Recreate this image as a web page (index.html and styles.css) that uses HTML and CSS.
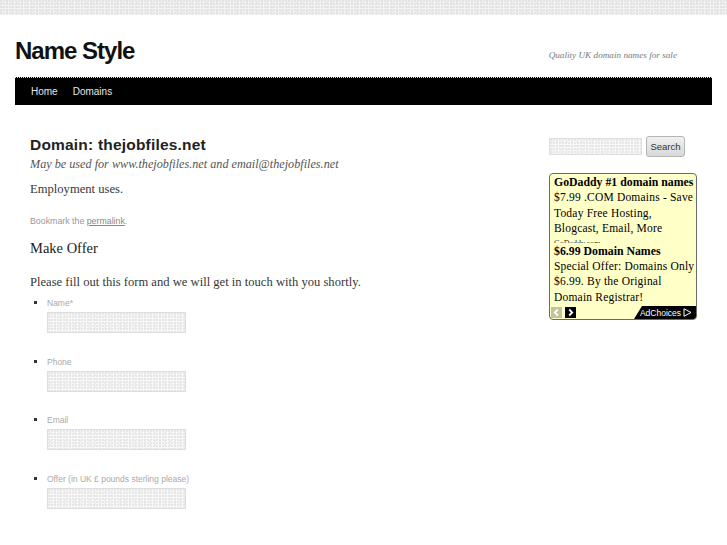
FILE: index.html
```html
<!DOCTYPE html>
<html>
<head>
<meta charset="utf-8">
<title>Domain: thejobfiles.net | Name Style</title>
<link rel="stylesheet" href="styles.css">
</head>
<body>
<div class="topband"></div>
<div class="page">
  <header class="site-header">
    <h1 class="site-title">Name Style</h1>
    <p class="tagline">Quality UK domain names for sale</p>
  </header>
  <nav class="access">
    <a href="#">Home</a>
    <a href="#">Domains</a>
  </nav>
  <div class="main">
    <div class="content">
      <h2 class="entry-title">Domain: thejobfiles.net</h2>
      <p class="subtitle">May be used for www.thejobfiles.net and email@thejobfiles.net</p>
      <p class="body-text">Employment uses.</p>
      <p class="meta">Bookmark the <a href="#">permalink</a>.</p>
      <h3 class="offer-title">Make Offer</h3>
      <p class="body-text intro">Please fill out this form and we will get in touch with you shortly.</p>
      <ul class="form-list">
        <li><label>Name*</label><span class="field"></span></li>
        <li><label>Phone</label><span class="field"></span></li>
        <li><label>Email</label><span class="field"></span></li>
        <li><label>Offer (in UK £ pounds sterling please)</label><span class="field"></span></li>
      </ul>
    </div>
    <aside class="sidebar">
      <div class="search">
        <span class="search-field"></span>
        <span class="search-btn">Search</span>
      </div>
      <div class="ad">
        <div class="ad-body">
          <div class="ad-title">GoDaddy #1 domain names</div>
          <div class="ad-text">$7.99 .COM Domains - Save<br>Today Free Hosting,<br>Blogcast, Email, More</div>
          <div class="ad-url">GoDaddy.com</div>
          <div class="ad-title">$6.99 Domain Names</div>
          <div class="ad-text">Special Offer: Domains Only<br>$6.99. By the Original<br>Domain Registrar!</div>
          <div class="ad-url">www.NetworkSolutions.com</div>
        </div>
        <div class="ad-foot">
          <span class="nav-btn prev"><svg width="11" height="11" viewBox="0 0 11 11"><path d="M6.8 2.5 L3.8 5.5 L6.8 8.5" fill="none" stroke="#fff" stroke-width="1.8"/></svg></span>
          <span class="nav-btn next"><svg width="11" height="11" viewBox="0 0 11 11"><path d="M4.2 2.5 L7.2 5.5 L4.2 8.5" fill="none" stroke="#fff" stroke-width="1.8"/></svg></span>
          <span class="adchoices">AdChoices <svg width="9" height="9" viewBox="0 0 9 9"><path d="M1 0.8 L8 4.5 L1 8.2 Z" fill="none" stroke="#fff" stroke-width="1"/></svg></span>
        </div>
      </div>
    </aside>
  </div>
</div>
</body>
</html>
```

FILE: styles.css
```css
html, body {
  margin: 0;
  padding: 0;
}
body {
  background: #fff;
  font-family: "Liberation Sans", Arial, sans-serif;
  color: #373737;
  width: 727px;
  overflow: hidden;
}
.topband {
  height: 15px;
  background-color: #f3f3f3;
  background-image:
    radial-gradient(circle at 1px 1px, #e2e2e2 0.7px, transparent 0.9px),
    radial-gradient(circle at 1px 1px, #e6e6e6 0.7px, transparent 0.9px);
  background-size: 3px 3px, 5px 4px;
  background-position: 0 0, 1px 2px;
}
.page {
  padding: 0 15px;
}
.site-header {
  display: flex;
  justify-content: space-between;
  align-items: flex-start;
  height: 62px;
}
.site-title {
  margin: 22px 0 0 0;
  font-size: 24px;
  line-height: 28px;
  font-weight: bold;
  color: #111;
  letter-spacing: -1px;
}
.tagline {
  margin: 35px 35px 0 0;
  font-family: "Liberation Serif", "Times New Roman", serif;
  font-style: italic;
  font-size: 9.2px;
  color: #7a7a7a;
}
.access {
  background: #000;
  height: 27px;
  display: flex;
  align-items: center;
  padding-left: 16px;
  gap: 15px;
  border-top: 1px dotted #e0e0e0;
}
.access a {
  color: #e6e6e6;
  text-decoration: none;
  font-size: 10px;
}
.main {
  display: flex;
  justify-content: space-between;
  padding: 0 0 0 15px;
}
.content {
  width: 400px;
  padding-top: 31px;
}
.entry-title {
  margin: 0;
  font-size: 15.5px;
  line-height: 18px;
  font-weight: bold;
  color: #222;
  letter-spacing: 0.2px;
}
.subtitle {
  margin: 2px 0 0 0;
  font-family: "Liberation Serif", "Times New Roman", serif;
  font-style: italic;
  font-size: 12.2px;
  line-height: 16px;
  color: #555;
}
.body-text {
  margin: 9px 0 0 0;
  font-family: "Liberation Serif", "Times New Roman", serif;
  font-size: 12.6px;
  line-height: 16px;
  color: #373737;
}
.meta {
  margin: 19px 0 0 0;
  font-size: 8.8px;
  line-height: 10px;
  color: #999;
}
.meta a {
  color: #888;
}
.offer-title {
  margin: 13px 0 0 0;
  font-family: "Liberation Serif", "Times New Roman", serif;
  font-weight: normal;
  font-size: 14.5px;
  line-height: 18px;
  color: #222;
}
.intro {
  margin-top: 17px;
}
.form-list {
  list-style: square;
  margin: 7px 0 0 0;
  padding: 0 0 0 17px;
  color: #333;
}
.form-list li {
  font-size: 10px;
  margin-bottom: 22.5px;
}
.form-list label {
  display: block;
  color: #aaa;
  font-size: 8.5px;
  line-height: 13px;
}
.field {
  display: block;
  margin-top: 2px;
  width: 137px;
  height: 19px;
  border: 1.5px solid #dedede;
  background-color: #f8f8f8;
  background-image:
    radial-gradient(circle at 1px 1px, #e6e6e6 0.7px, transparent 0.9px),
    radial-gradient(circle at 1px 1px, #ebebeb 0.7px, transparent 0.9px);
  background-size: 3px 3px, 5px 4px;
  background-position: 0 0, 1px 2px;
}
.sidebar {
  width: 163px;
  padding-top: 31px;
}
.search {
  display: flex;
  align-items: center;
  gap: 4px;
}
.search-field {
  display: block;
  width: 91px;
  height: 15px;
  border: 1px solid #dedede;
  background-color: #f8f8f8;
  background-image:
    radial-gradient(circle at 1px 1px, #e6e6e6 0.7px, transparent 0.9px),
    radial-gradient(circle at 1px 1px, #ebebeb 0.7px, transparent 0.9px);
  background-size: 3px 3px, 5px 4px;
  background-position: 0 0, 1px 2px;
}
.search-btn {
  display: flex;
  align-items: center;
  justify-content: center;
  width: 37px;
  height: 19px;
  border: 1px solid #b5b5b5;
  border-radius: 3px;
  background: linear-gradient(#f0f0f0, #d8d8d8);
  font-size: 9.5px;
  color: #333;
}
.ad {
  margin-top: 16px;
  width: 146px;
  height: 145px;
  border: 1px solid #6a6a6a;
  border-radius: 4px;
  background: #ffffc8;
  overflow: hidden;
  display: flex;
  flex-direction: column;
  font-family: "Liberation Serif", "Times New Roman", serif;
  color: #000;
}
.ad-body {
  flex: 1;
  overflow: hidden;
  padding: 1px 0 0 4px;
}
.ad-title {
  font-weight: bold;
  font-size: 11.8px;
  line-height: 15px;
  white-space: nowrap;
}
.ad-text {
  font-size: 11.5px;
  line-height: 15.5px;
  letter-spacing: 0.2px;
  white-space: nowrap;
}
.ad-url {
  font-size: 8px;
  line-height: 10px;
  height: 4px;
  margin: 2px 0 1px 0;
  overflow: hidden;
  color: #333;
}
.ad-foot {
  height: 13px;
  display: flex;
  align-items: center;
  padding-left: 1px;
}
.nav-btn {
  display: block;
  width: 11px;
  height: 11px;
  margin-right: 3px;
}
.nav-btn svg {
  display: block;
}
.prev {
  background: #c4c49c;
}
.next {
  background: #000;
}
.adchoices {
  margin-left: auto;
  height: 13px;
  width: 58px;
  background: #000;
  color: #fff;
  font-family: "Liberation Sans", Arial, sans-serif;
  font-size: 8.5px;
  display: flex;
  align-items: center;
  justify-content: flex-end;
  gap: 2px;
  padding-right: 4px;
  clip-path: polygon(8px 0, 100% 0, 100% 100%, 0 100%);
}
```
